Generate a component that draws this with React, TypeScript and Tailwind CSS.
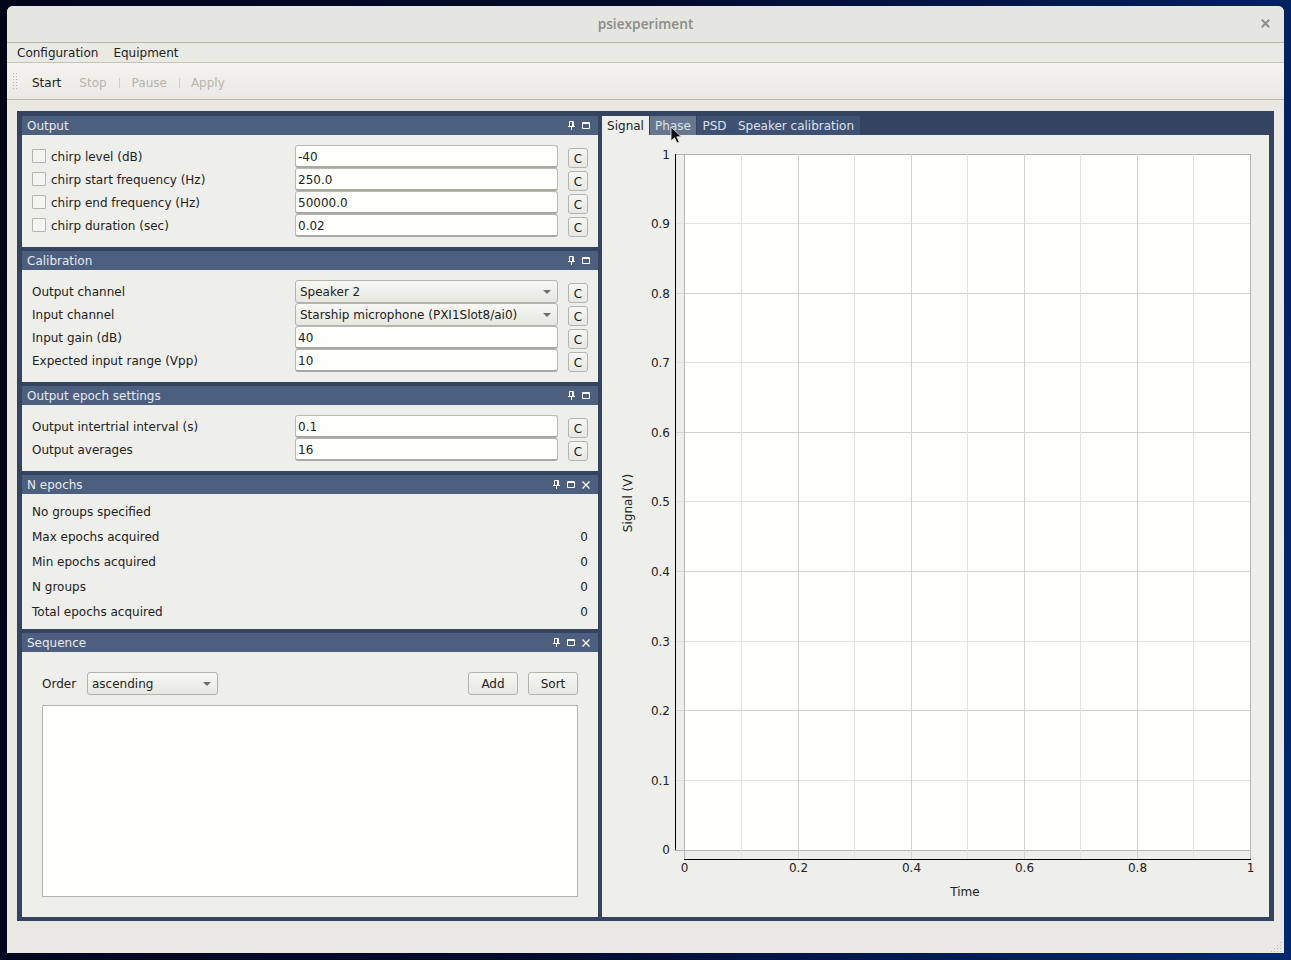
import React from "react";

const font = "[font-family:'DejaVu_Sans',sans-serif]";

function Pin() {
  return (
    <svg width="7" height="9" viewBox="0 0 7 9" className="block">
      <path d="M1.5 0.5H5.5V5.5H1.5Z M4.5 0.5V5.5 M0 5.5H7 M3.5 5.5V9" fill="none" stroke="#ffffff" strokeWidth="1" />
    </svg>
  );
}
function Max() {
  return (
    <svg width="8" height="7" viewBox="0 0 8 7" className="block">
      <path d="M0.5 0.5H7.5V6.5H0.5Z M0.5 1.5H7.5" fill="none" stroke="#ffffff" strokeWidth="1" />
    </svg>
  );
}
function Close() {
  return (
    <svg width="8" height="8" viewBox="0 0 8 8" className="block">
      <path d="M0.5 0.5L7.5 7.5M7.5 0.5L0.5 7.5" fill="none" stroke="#ffffff" strokeWidth="1.3" />
    </svg>
  );
}

function DockTitle({ title, closable }: { title: string; closable?: boolean }) {
  return (
    <div className="h-[19px] flex items-center pl-[5px] pr-[8px] bg-[#4d5f7f] text-[#e6e9ef]">
      <span className="flex-1">{title}</span>
      <span className="flex items-center gap-[7px]">
        <Pin />
        <Max />
        {closable && <Close />}
      </span>
    </div>
  );
}

function CButton() {
  return (
    <div className="w-[20px] h-[20px] mt-[3px] pt-[1px] flex items-center justify-center border border-[#b4b4ac] rounded-[3px] bg-gradient-to-b from-[#f6f6f2] to-[#e8e8e3] text-[#222]">
      C
    </div>
  );
}

function TextInput({ value }: { value: string }) {
  return (
    <div className="w-[263px] h-[23px] pl-[2px] pt-[1px] flex items-center bg-[#fefefa] border border-[#b9b9b1] border-b-2 border-b-[#a9a9a1] rounded-[3px] text-[#222]">
      {value}
    </div>
  );
}

function Combo({ value, w = "w-[263px]" }: { value: string; w?: string }) {
  return (
    <div className={`${w} h-[23px] pl-[4px] pr-[6px] flex items-center justify-between border border-[#b4b4ac] rounded-[3px] bg-gradient-to-b from-[#f8f8f4] to-[#e7e7e1] text-[#222]`}>
      <span>{value}</span>
      <svg width="8" height="4" viewBox="0 0 8 4" className="block">
        <path d="M0 0H8L4 4Z" fill="#6e6e6a" />
      </svg>
    </div>
  );
}

function Row({ label, check, children }: { label: string; check?: boolean; children: React.ReactNode }) {
  return (
    <div className="h-[23px] flex">
      <div className="w-[263px] flex items-center gap-[5px] text-[#222]">
        {check && <span className="w-[14px] h-[14px] mb-[1px] border border-[#b4b4ac] rounded-[1px] bg-[#f4f4f0]" />}
        <span>{label}</span>
      </div>
      {children}
      <div className="ml-[10px]">
        <CButton />
      </div>
    </div>
  );
}

function FormBody({ children }: { children: React.ReactNode }) {
  return <div className="bg-[#eeeeeb] p-[10px]">{children}</div>;
}

function StatRow({ label, value }: { label: string; value?: string }) {
  return (
    <div className="h-[25px] flex items-center justify-between text-[#222]">
      <span>{label}</span>
      {value && <span>{value}</span>}
    </div>
  );
}

function Grip() {
  const dots: React.ReactNode[] = [];
  for (let r = 0; r < 6; r++) {
    for (let c = 0; c < 2; c++) {
      dots.push(<rect key={`${r}-${c}`} x={c * 3} y={r * 3} width="1" height="1" fill="#b9b9b1" />);
    }
  }
  return (
    <svg width="4" height="17" viewBox="0 0 4 17" className="block">
      {dots}
    </svg>
  );
}

function Chart() {
  const xs = [684, 741, 798, 854, 911, 967, 1024, 1080, 1137, 1193, 1250];
  const ys = [850, 780, 710, 641, 571, 501, 432, 362, 293, 223, 154];
  const yLabels = ["0", "0.1", "0.2", "0.3", "0.4", "0.5", "0.6", "0.7", "0.8", "0.9", "1"];
  const xLabels = ["0", "0.2", "0.4", "0.6", "0.8", "1"];
  return (
    <svg width="667" height="782" viewBox="602 135 667 782" className="block" fontFamily="'DejaVu Sans', sans-serif" fontSize="12">
      <rect x="684" y="154" width="566" height="696" fill="#fffffb" />
      {ys.map((y, i) => (
        <line key={y} x1="675" x2="1250" y1={y + 0.5} y2={y + 0.5} stroke={i === 0 || i === 10 ? "#b5b5b1" : i % 2 ? "#e2e2de" : "#d2d2ce"} />
      ))}
      {xs.map((x, i) => (
        <line key={x} x1={x + 0.5} x2={x + 0.5} y1="154" y2="859" stroke={i === 0 || i === 10 ? "#b5b5b1" : i % 2 ? "#e2e2de" : "#d2d2ce"} />
      ))}
      <line x1="675.5" x2="675.5" y1="154" y2="850" stroke="#000" />
      <line x1="684" x2="1251" y1="859.5" y2="859.5" stroke="#000" />
      {ys.map((y, i) => (
        <text key={y} x="670" y={i === 0 ? y + 4 : y + 5} textAnchor="end" fill="#222">{yLabels[i]}</text>
      ))}
      {xLabels.map((t, i) => (
        <text key={t} x={xs[i * 2] + 0.5} y="872" textAnchor="middle" fill="#222">{t}</text>
      ))}
      <text x="965" y="896" textAnchor="middle" fill="#222">Time</text>
      <text transform="translate(632 503) rotate(-90)" textAnchor="middle" fill="#222">Signal (V)</text>
    </svg>
  );
}

export default function App() {
  return (
    <div className={`relative w-[1291px] h-[960px] overflow-hidden pl-[7px] pt-[6px] bg-[linear-gradient(100deg,#01051a_0%,#020a2c_45%,#02205c_85%,#01286e_100%)] ${font} text-[12px]`}>
      <div className="w-[1277px] h-[947px] flex flex-col bg-[#e9e8e2] rounded-t-[6px] overflow-hidden">
        <div className="h-[37px] flex items-center justify-center relative bg-[#e6e6e0] border-b border-[#b7b7af]">
          <span className="font-['Open_Sans',sans-serif] font-semibold text-[13.7px] text-[#8b8b87]">psiexperiment</span>
          <svg width="9" height="9" viewBox="0 0 9 9" className="absolute right-[14px] top-[13px]">
            <path d="M0.8 0.8L8.2 8.2M8.2 0.8L0.8 8.2" stroke="#8f8f8b" strokeWidth="2" fill="none" />
          </svg>
        </div>
        <div className="h-[20px] flex items-center pl-[10px] gap-[15px] bg-[#eaeae4] border-b border-[#c4c4bc] text-[#222]">
          <span>Configuration</span>
          <span>Equipment</span>
        </div>
        <div className="h-[37px] pt-[4px] flex items-center pl-[6px] bg-gradient-to-b from-[#f4f3ed] to-[#ebe9e3] border-b border-[#b7b7af] text-[#b5b5b1]">
          <span className="-mt-[4px]">
            <Grip />
          </span>
          <span className="ml-[15px] text-[#222]">Start</span>
          <span className="ml-[18px]">Stop</span>
          <span className="ml-[12px] w-px h-[10px] bg-[#d0d0ca]" />
          <span className="ml-[12px]">Pause</span>
          <span className="ml-[12px] w-px h-[10px] bg-[#d0d0ca]" />
          <span className="ml-[11px]">Apply</span>
        </div>
        <div className="relative flex-1 pt-[11px] pl-[10px] pr-[10px] pb-[32px]">
          <div className="h-[810px] flex gap-[4px] pt-[5px] pl-[5px] pr-[5px] pb-[4px] bg-[#34435f]">
            <div className="w-[576px] flex flex-col gap-[4px]">
              <div>
                <DockTitle title="Output" />
                <FormBody>
                  <Row label="chirp level (dB)" check><TextInput value="-40" /></Row>
                  <Row label="chirp start frequency (Hz)" check><TextInput value="250.0" /></Row>
                  <Row label="chirp end frequency (Hz)" check><TextInput value="50000.0" /></Row>
                  <Row label="chirp duration (sec)" check><TextInput value="0.02" /></Row>
                </FormBody>
              </div>
              <div>
                <DockTitle title="Calibration" />
                <FormBody>
                  <Row label="Output channel"><Combo value="Speaker 2" /></Row>
                  <Row label="Input channel"><Combo value="Starship microphone (PXI1Slot8/ai0)" /></Row>
                  <Row label="Input gain (dB)"><TextInput value="40" /></Row>
                  <Row label="Expected input range (Vpp)"><TextInput value="10" /></Row>
                </FormBody>
              </div>
              <div>
                <DockTitle title="Output epoch settings" />
                <FormBody>
                  <Row label="Output intertrial interval (s)"><TextInput value="0.1" /></Row>
                  <Row label="Output averages"><TextInput value="16" /></Row>
                </FormBody>
              </div>
              <div>
                <DockTitle title="N epochs" closable />
                <div className="bg-[#eeeeeb] pl-[10px] pr-[10px] pt-[5px] pb-[5px]">
                  <StatRow label="No groups specified" />
                  <StatRow label="Max epochs acquired" value="0" />
                  <StatRow label="Min epochs acquired" value="0" />
                  <StatRow label="N groups" value="0" />
                  <StatRow label="Total epochs acquired" value="0" />
                </div>
              </div>
              <div className="flex-1 flex flex-col">
                <DockTitle title="Sequence" closable />
                <div className="flex-1 flex flex-col bg-[#eeeeeb] pt-[20px] pb-[20px] px-[20px] text-[#222]">
                  <div className="h-[23px] flex items-center">
                    <span className="w-[45px]">Order</span>
                    <Combo value="ascending" w="w-[131px]" />
                    <div className="flex-1" />
                    <div className="w-[50px] h-[23px] flex items-center justify-center border border-[#b4b4ac] rounded-[3px] bg-gradient-to-b from-[#f6f6f2] to-[#e8e8e3]">Add</div>
                    <div className="ml-[10px] w-[50px] h-[23px] flex items-center justify-center border border-[#b4b4ac] rounded-[3px] bg-gradient-to-b from-[#f6f6f2] to-[#e8e8e3]">Sort</div>
                  </div>
                  <div className="mt-[10px] flex-1 bg-[#fefefa] border border-[#b4b4ac]" />
                </div>
              </div>
            </div>
            <div className="w-[667px] flex flex-col">
              <div className="h-[19px] flex text-[#dde1e8]">
                <div className="w-[47px] flex items-center justify-center bg-[#eeeeeb] text-[#222]">Signal</div>
                <div className="ml-px w-[46px] flex items-center justify-center bg-[#67778f]">Phase</div>
                <div className="ml-px w-[36px] pr-px flex items-center justify-center bg-[#3e5172]">PSD</div>
                <div className="w-[127px] pr-px flex items-center justify-center bg-[#3e5172]">Speaker calibration</div>
              </div>
              <div className="flex-1 bg-[#eeeeeb]">
                <Chart />
              </div>
            </div>
          </div>
        </div>
        <svg width="12" height="12" viewBox="0 0 12 12" className="absolute left-[1271px] top-[941px]" fill="#bdbdb5">
          <rect x="9" y="1" width="1" height="1" />
          <rect x="9" y="4" width="1" height="1" />
          <rect x="6" y="4" width="1" height="1" />
          <rect x="9" y="7" width="1" height="1" />
          <rect x="6" y="7" width="1" height="1" />
          <rect x="3" y="7" width="1" height="1" />
          <rect x="9" y="10" width="1" height="1" />
          <rect x="6" y="10" width="1" height="1" />
          <rect x="3" y="10" width="1" height="1" />
          <rect x="0" y="10" width="1" height="1" />
        </svg>
      </div>
      <svg width="12" height="19" viewBox="0 0 12 19" className="absolute left-[670px] top-[126px]">
        <path d="M1 1V15L4.5 11.7L7 17L9.3 16L6.8 10.8H11.3Z" fill="#111" stroke="#eee" strokeWidth="0.8" />
      </svg>
    </div>
  );
}
